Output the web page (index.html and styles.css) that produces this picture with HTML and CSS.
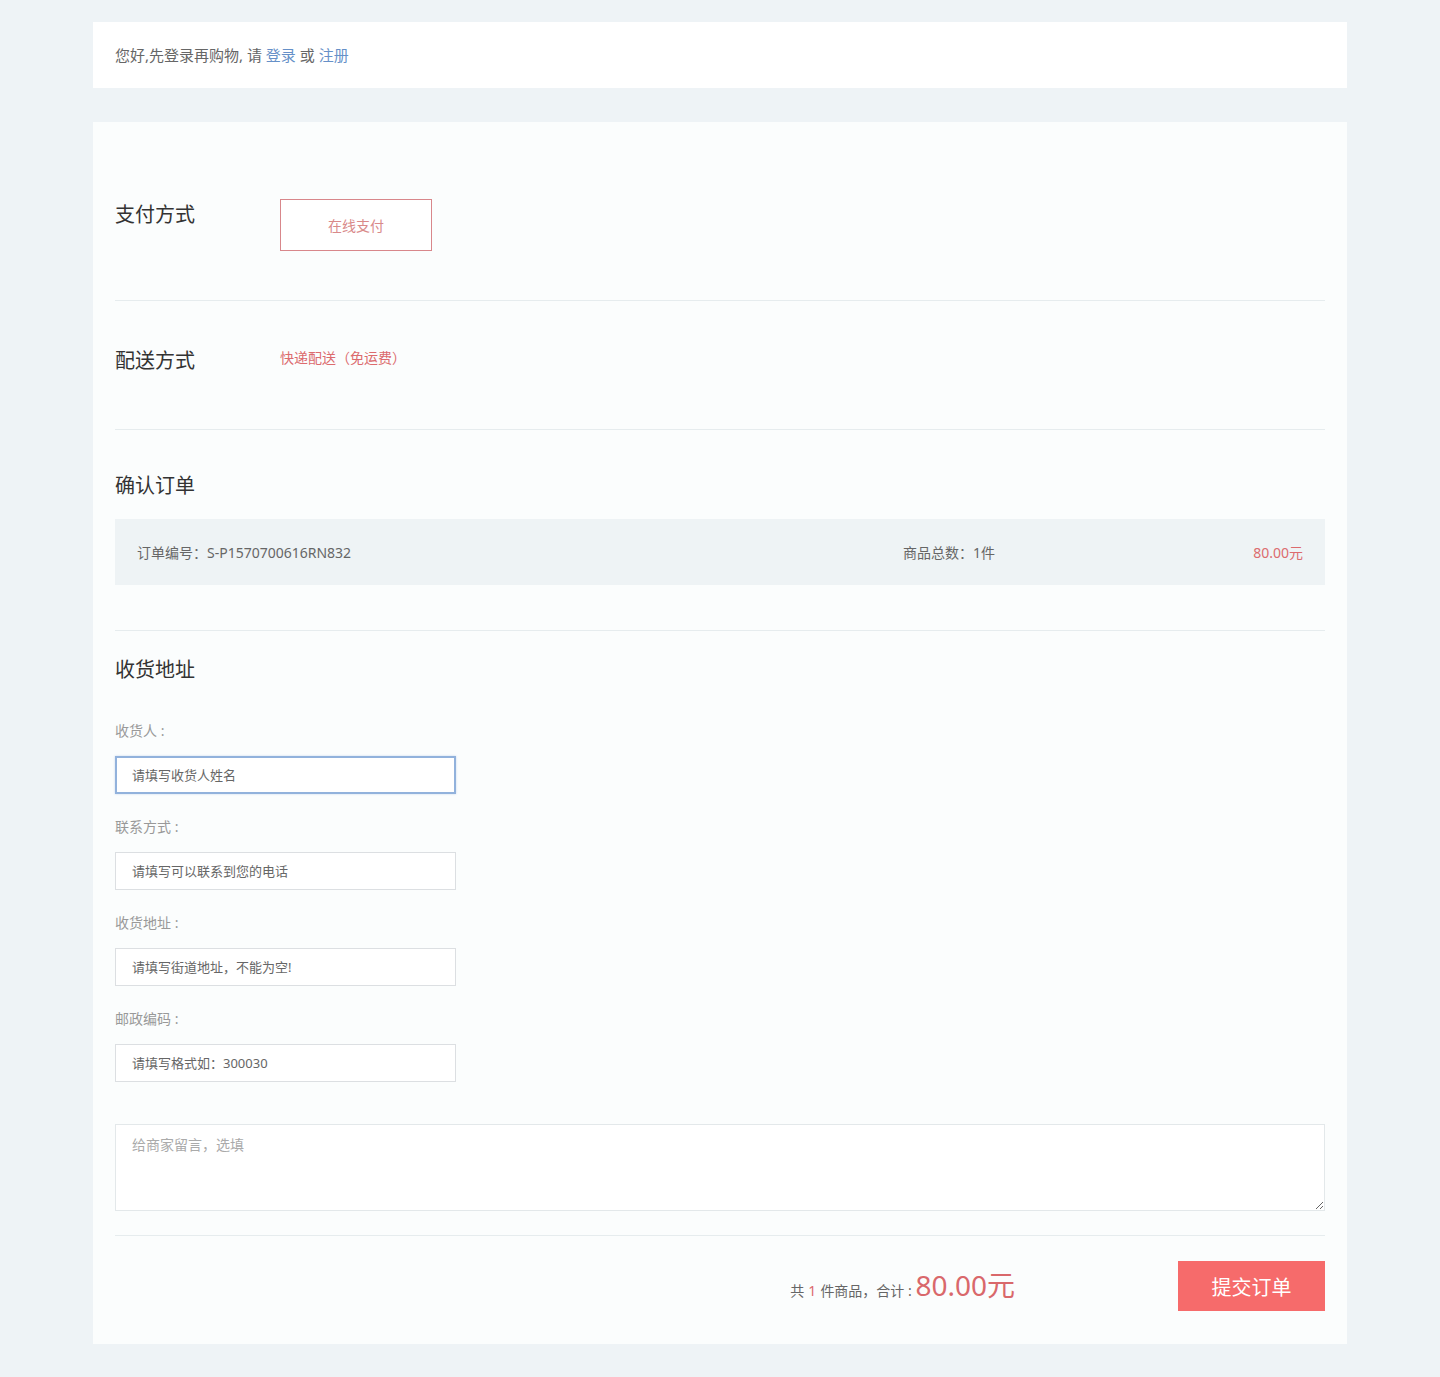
FILE: index.html
```html
<!DOCTYPE html>
<html lang="zh-CN">
<head>
  <meta charset="UTF-8">
  <meta name="viewport" content="width=device-width, initial-scale=1.0">
  <title>确认订单</title>
  <link rel="stylesheet" href="styles.css">
</head>
<body>
  <div class="container">
    <div class="login-tip">
      您好,先登录再购物, 请 <a href="#">登录</a> 或 <a href="#">注册</a>
    </div>

    <div class="order-card">
      <div class="section pay-section">
        <div class="section-title">支付方式</div>
        <button class="pay-btn">在线支付</button>
      </div>

      <div class="section ship-section">
        <div class="section-title">配送方式</div>
        <div class="ship-text">快递配送（免运费）</div>
      </div>

      <div class="section confirm-section">
        <div class="section-title">确认订单</div>
        <div class="order-bar">
          <span>订单编号：S-P1570700616RN832</span>
          <span>商品总数：1件</span>
          <span class="price">80.00元</span>
        </div>
      </div>

      <div class="section address-section">
        <div class="section-title">收货地址</div>
        <div class="field">
          <label>收货人 :</label>
          <input type="text" class="is-focus" placeholder="请填写收货人姓名">
        </div>
        <div class="field">
          <label>联系方式 :</label>
          <input type="text" placeholder="请填写可以联系到您的电话">
        </div>
        <div class="field">
          <label>收货地址 :</label>
          <input type="text" placeholder="请填写街道地址，不能为空!">
        </div>
        <div class="field">
          <label>邮政编码 :</label>
          <input type="text" placeholder="请填写格式如：300030">
        </div>
        <textarea placeholder="给商家留言，选填"></textarea>
      </div>

      <div class="footer">
        <div class="total">
          共<em>1</em>件商品，合计 : <span class="total-price">80.00元</span>
        </div>
        <button class="submit-btn">提交订单</button>
      </div>
    </div>
  </div>
</body>
</html>
```

FILE: styles.css
```css
body {
  margin: 0;
  padding: 22px 0 32px;
  background-color: #eef3f6;
  font-family: "Noto Sans", "Noto Sans CJK SC", sans-serif;
  color: #333;
}
.container {
  width: 1254px;
  margin: 0 auto;
}
.login-tip {
  height: 66px;
  line-height: 66px;
  padding: 0 22px;
  background-color: #fff;
  font-size: 15px;
  color: #666;
  margin-bottom: 34px;
}
.login-tip a {
  color: #6690c8;
  text-decoration: none;
}
.order-card {
  background-color: #fbfdfd;
  padding: 0 22px;
}
.section {
  border-bottom: 1px solid #e6ecee;
}
.section-title {
  font-size: 20px;
  line-height: 30px;
  color: #333;
}
.pay-section {
  display: flex;
  align-items: flex-start;
  padding: 78px 0 49px;
}
.pay-section .section-title,
.ship-section .section-title {
  width: 165px;
}
.pay-btn {
  width: 152px;
  height: 52px;
  margin-top: -1px;
  border: 1px solid #d8878b;
  background: #fff;
  color: #d98a8a;
  font-family: inherit;
  font-size: 14px;
  cursor: pointer;
}
.ship-section {
  display: flex;
  align-items: flex-start;
  padding: 45px 0 53px;
}
.ship-text {
  font-size: 14px;
  line-height: 24px;
  color: #dc6b6e;
}
.confirm-section {
  padding: 41px 0 45px;
}
.order-bar {
  display: grid;
  grid-template-columns: 766px 1fr auto;
  align-items: center;
  height: 66px;
  margin-top: 18px;
  padding: 0 22px;
  background-color: #eef3f5;
  font-size: 14px;
  color: #666;
}
.order-bar .price {
  color: #dc6b6e;
}
.address-section {
  padding: 24px 0 24px;
}
.address-section .section-title {
  margin-bottom: 36px;
}
.field {
  margin-bottom: 23px;
}
.field label {
  display: block;
  font-size: 14px;
  line-height: 20px;
  color: #999;
  margin-bottom: 15px;
}
.field input {
  display: block;
  width: 341px;
  height: 38px;
  box-sizing: border-box;
  padding: 0 16px;
  border: 1px solid #dcdfe2;
  background: #fff;
  font-family: inherit;
  font-size: 13px;
  color: #333;
  outline: none;
}
.field input::placeholder {
  color: #666;
}
.field input.is-focus {
  border: 2px solid #92b2dc;
  padding-left: 15px;
  box-shadow: 0 0 2px rgba(80, 130, 200, 0.3);
}
textarea {
  display: block;
  width: 100%;
  height: 87px;
  box-sizing: border-box;
  margin-top: 42px;
  padding: 9px 16px;
  border: 1px solid #e3e8ea;
  background: #fff;
  font-family: inherit;
  font-size: 14px;
  color: #333;
  outline: none;
}
textarea::placeholder {
  color: #aaa;
}
.footer {
  display: flex;
  justify-content: flex-end;
  align-items: center;
  padding: 25px 0 33px;
}
.total {
  font-size: 14px;
  color: #666;
  margin-right: 163px;
  margin-top: -4px;
}
.total em {
  font-style: normal;
  color: #dc6b6e;
  margin: 0 4px;
}
.total-price {
  font-size: 28px;
  color: #d9686b;
}
.submit-btn {
  width: 147px;
  height: 50px;
  border: none;
  background-color: #f66b6b;
  color: #fff;
  font-family: inherit;
  font-size: 20px;
  cursor: pointer;
}
```
